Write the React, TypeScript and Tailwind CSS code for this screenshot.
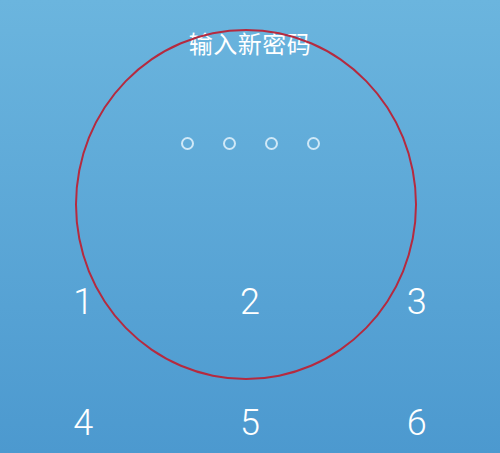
export default function App() {
  const keys = ["1", "2", "3", "4", "5", "6"];
  return (
    <div className="relative h-[453px] w-[500px] overflow-hidden bg-gradient-to-b from-[#6bb5de] to-[#4c99cf] font-['Roboto','Noto_Sans_CJK_SC',sans-serif] text-white">
      <div className="flex flex-col items-center pt-[25px]">
        <h1 className="font-['Noto_Sans_CJK_SC',sans-serif] text-[24px] leading-[36px] tracking-[0.5px]">
          输入新密码
        </h1>
        <div className="mt-[76px] flex gap-[29px]">
          {[0, 1, 2, 3].map((i) => (
            <span
              key={i}
              className="h-[13px] w-[13px] rounded-full border-2 border-[#cfe8f7]"
            />
          ))}
        </div>
      </div>
      <div className="mt-[128px] grid grid-cols-3 gap-y-[73px]">
        {keys.map((k) => (
          <div
            key={k}
            className="flex h-[48px] items-center justify-center text-[36px] font-light leading-none"
          >
            {k}
          </div>
        ))}
      </div>
      <div className="absolute left-[75px] top-[29px] h-[351px] w-[342px] rounded-[50%] border-2 border-[#b52a3f]" />
    </div>
  );
}
